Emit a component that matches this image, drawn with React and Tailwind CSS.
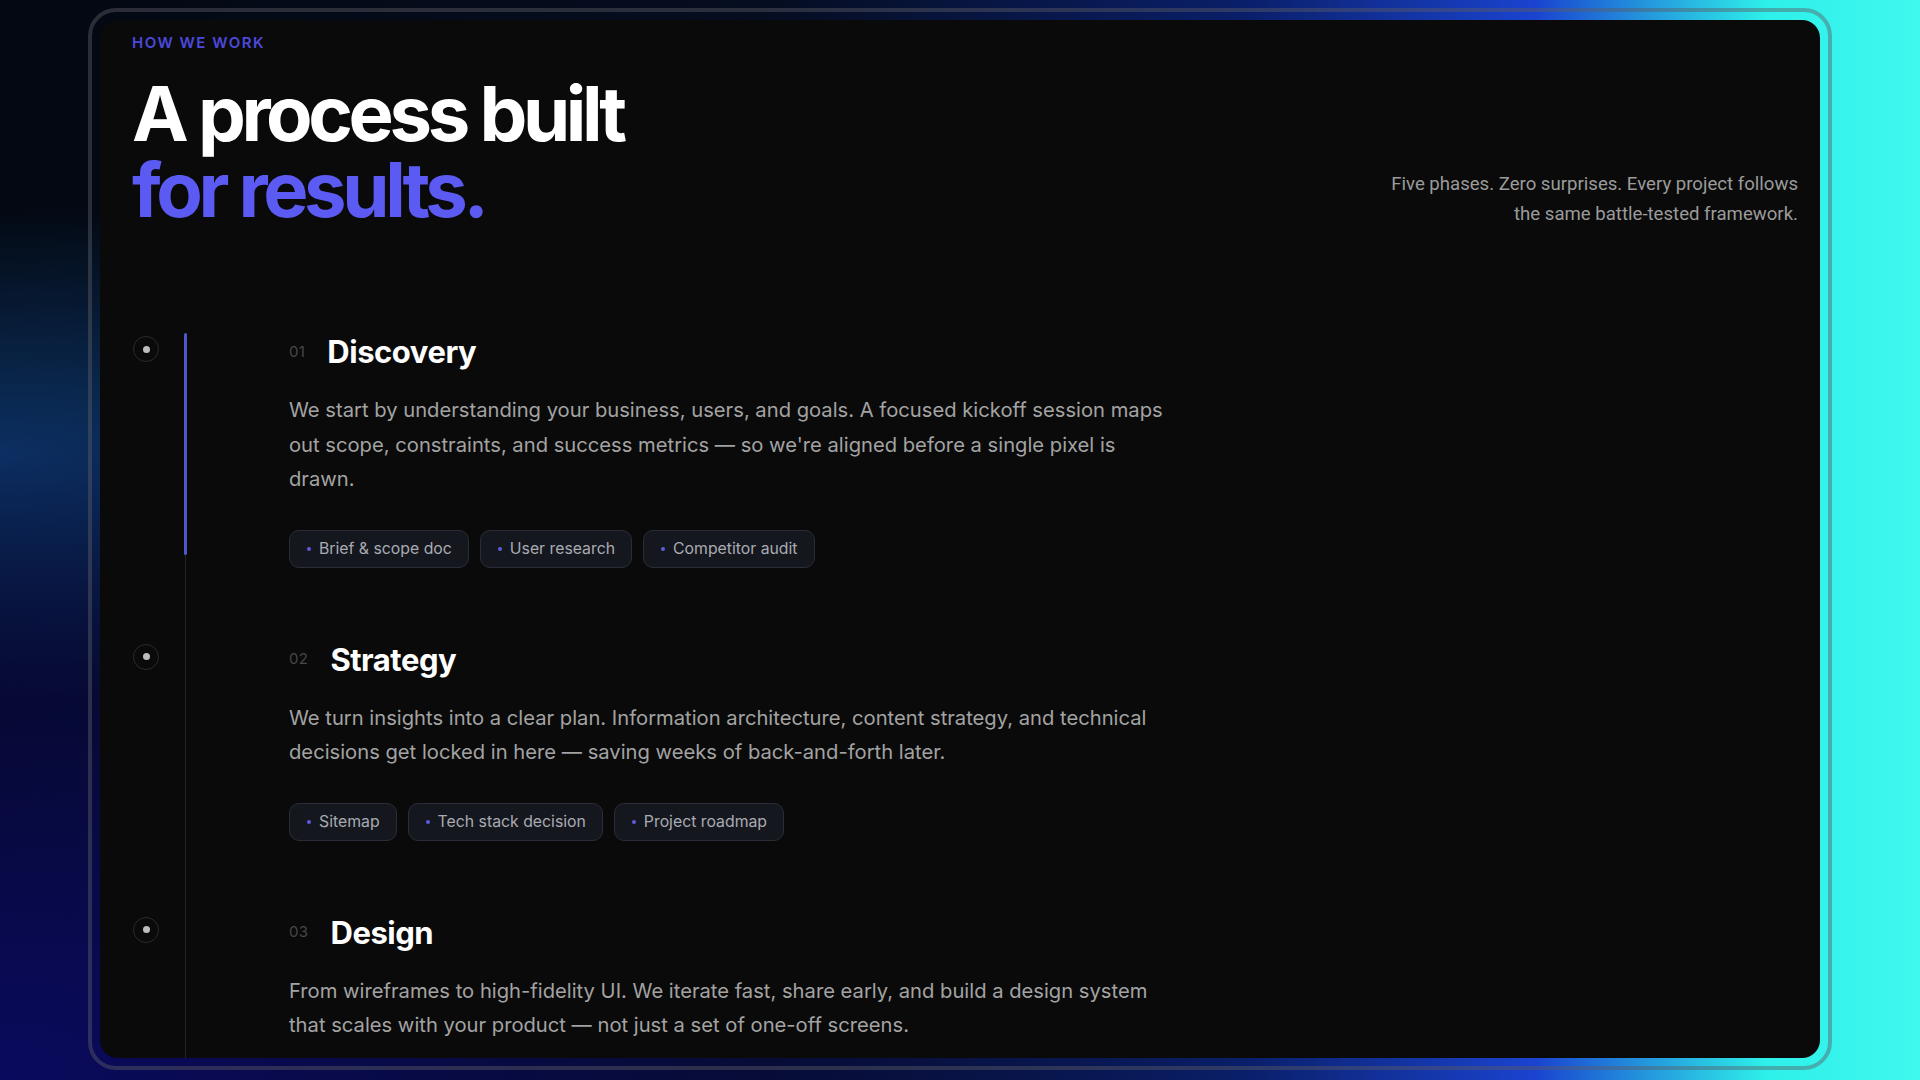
const steps = [
  {
    num: "01",
    title: "Discovery",
    desc: "We start by understanding your business, users, and goals. A focused kickoff session maps out scope, constraints, and success metrics — so we're aligned before a single pixel is drawn.",
    tags: ["Brief & scope doc", "User research", "Competitor audit"],
    active: true,
  },
  {
    num: "02",
    title: "Strategy",
    desc: "We turn insights into a clear plan. Information architecture, content strategy, and technical decisions get locked in here — saving weeks of back-and-forth later.",
    tags: ["Sitemap", "Tech stack decision", "Project roadmap"],
  },
  {
    num: "03",
    title: "Design",
    desc: "From wireframes to high-fidelity UI. We iterate fast, share early, and build a design system that scales with your product — not just a set of one-off screens.",
    tags: [],
  },
]

const Step = ({ num, title, desc, tags, active }) => {
  return (
    <div className="flex">
      {/* dot */}
      <div className="w-[26px] shrink-0 ml-[1px]">
        <div className="mt-[3px] w-[26px] h-[26px] rounded-full border border-[#2a2a2a] flex items-center justify-center">
          <div className="w-[7px] h-[7px] rounded-full bg-[#bdbdbd]" />
        </div>
      </div>

      {/* line */}
      <div className="relative w-[3px] ml-[25px] shrink-0 flex justify-center">
        <div className="w-px bg-[#242424]" />
        {active && <div className="absolute left-0 top-0 w-[3px] h-[222px] rounded-full bg-[#5156c9]" />}
      </div>

      {/* content */}
      <div className="pl-[102px] pb-[73px]">
        <div className="flex items-center gap-[22px] h-[38px]">
          <span className="text-[15px] text-[#474747] tracking-wide">{num}</span>
          <h3 className="text-[31px] leading-[38px] font-bold text-white tracking-[-0.015em] m-0">{title}</h3>
        </div>
        <p className="mt-[22px] max-w-[882px] text-[20.2px] leading-[34.5px] text-[#a3a3a3] m-0">{desc}</p>
        {tags.length > 0 && (
          <div className="mt-[33px] flex gap-[11px]">
            {tags.map((t) => (
              <div
                key={t}
                className="h-[38px] pl-[17px] pr-[16px] rounded-[10px] border border-[#2a2d37] bg-[#15171e] flex items-center gap-[8px] text-[15.8px] text-[#a9abb3]"
              >
                <span className="w-[4px] h-[4px] rounded-full bg-[#5b5bdc]" />
                {t}
              </div>
            ))}
          </div>
        )}
      </div>
    </div>
  )
}

export default function App() {
  return (
    <div className="w-[1920px] h-[1080px] overflow-hidden font-['Inter',sans-serif] px-[88px] pt-[8px] bg-[radial-gradient(ellipse_at_0%_100%,#0a0a5e_0%,transparent_45%),radial-gradient(ellipse_at_0%_42%,#0c3262_0%,transparent_28%),linear-gradient(90deg,#030811_0%,#050d20_40%,#0a1f6a_65%,#1a44d0_80%,#2ef0ea_92%,#3ff8ee_100%)]">
      <div className="h-[1062px] rounded-[28px] border-4 border-[rgba(90,90,100,0.45)] p-2">
        <div className="h-full rounded-[18px] bg-[#0a0a0a] overflow-hidden pl-[32px] pr-[22px] pt-[13px]">
          {/* Header */}
          <div className="flex justify-between items-end">
            <div>
              <div className="text-[15px] leading-[20px] font-semibold tracking-[0.1em] text-[#4b49dc]">HOW WE WORK</div>
              <h2 className="mt-[22px] text-[76px] leading-[76px] font-bold tracking-[-0.058em] m-0">
                <span className="block text-white">A process built</span>
                <span className="block text-[#5b5bf3]">for results.</span>
              </h2>
            </div>
            <p className="font-['Roboto',sans-serif] text-right text-[18.6px] leading-[30px] text-[#9b9b9b] mb-[-2px]">
              Five phases. Zero surprises. Every project follows
              <br />
              the same battle-tested framework.
            </p>
          </div>

          {/* Timeline */}
          <div className="mt-[106px] flex flex-col">
            {steps.map((s) => (
              <Step key={s.num} {...s} />
            ))}
          </div>
        </div>
      </div>
    </div>
  )
}
